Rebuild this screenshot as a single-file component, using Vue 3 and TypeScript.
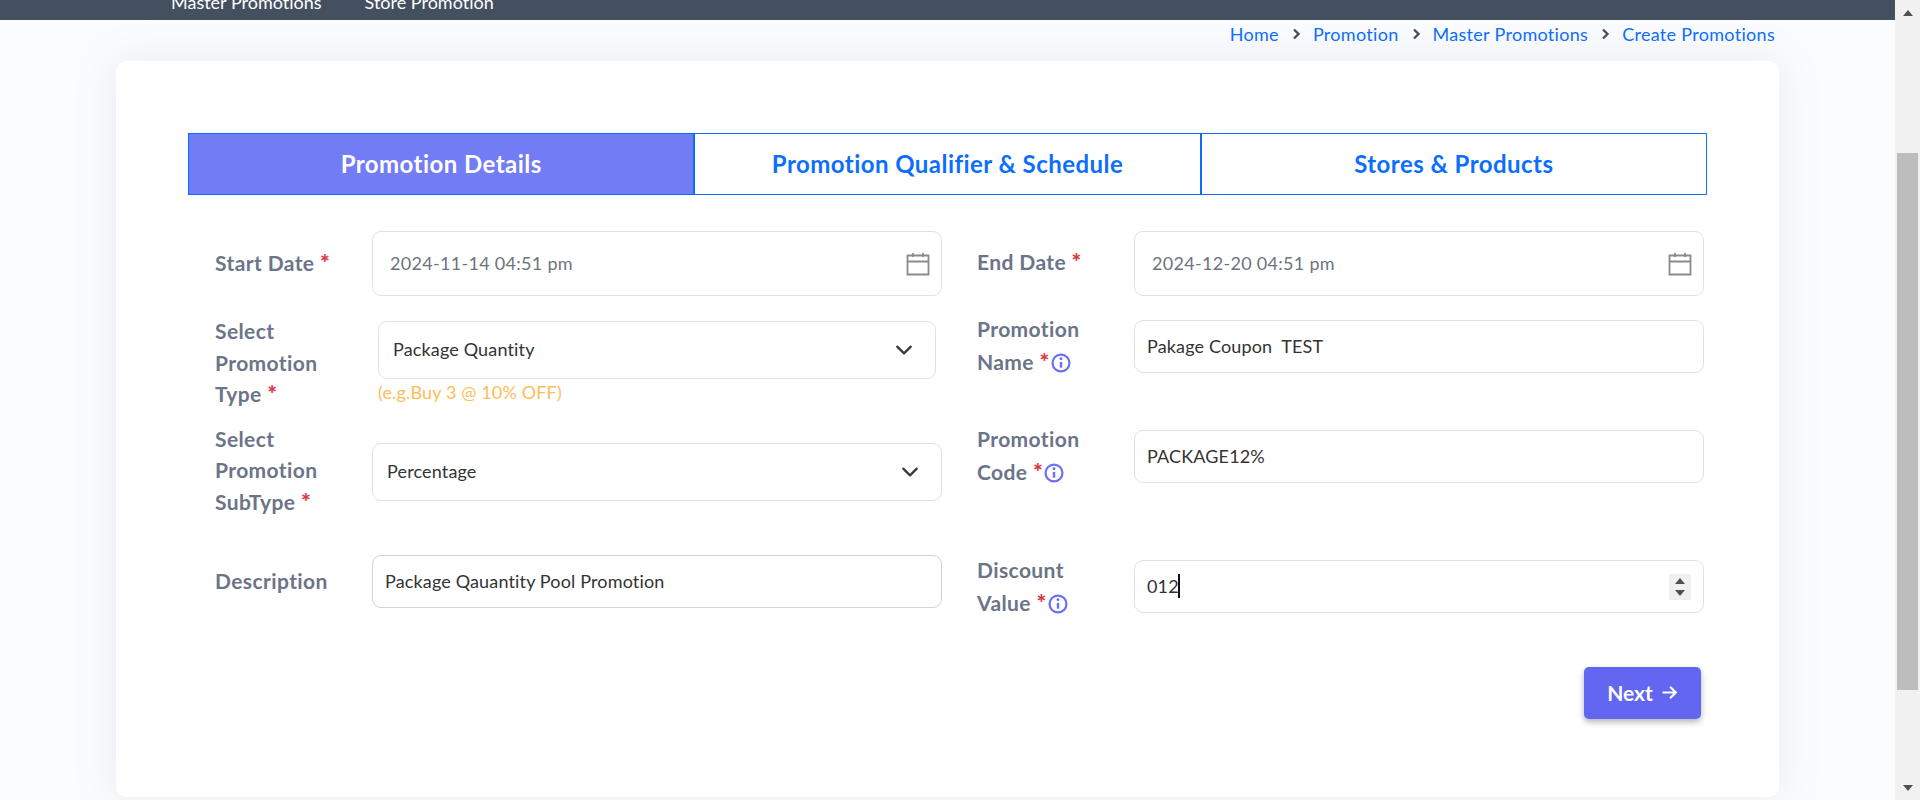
<template>
  <div class="page">
    <div class="main">
      <header class="topbar">
        <a class="nav-link">Master Promotions</a>
        <a class="nav-link">Store Promotion</a>
      </header>

      <nav class="crumbs">
        <template v-for="(crumb, i) in crumbs" :key="crumb">
          <svg v-if="i > 0" class="crumb-sep" viewBox="0 0 10 12" width="10" height="12">
            <path d="M3 1.5 7.5 6 3 10.5" fill="none" stroke="#444f5f" stroke-width="2.4" />
          </svg>
          <a class="crumb">{{ crumb }}</a>
        </template>
      </nav>

      <section class="card">
        <div class="tabs">
          <div class="tab active">Promotion Details</div>
          <div class="tab">Promotion Qualifier &amp; Schedule</div>
          <div class="tab">Stores &amp; Products</div>
        </div>

        <div class="form">
          <div class="col col-left">
            <div class="field row-date">
              <label class="label">Start Date <span class="req">*</span></label>
              <div class="control date">
                <span>2024-11-14 04:51 pm</span>
                <svg class="cal" viewBox="0 0 24 24" width="24" height="24">
                  <path d="M1.5 3.5h21v19h-21zM1.5 9.5h21M7 1v4M17 1v4" fill="none" stroke="#8a8a8a" stroke-width="1.8" />
                </svg>
              </div>
            </div>

            <div class="field row-type">
              <label class="label">Select Promotion Type <span class="req">*</span></label>
              <div class="select-wrap">
                <div class="control select">
                  <span>Package Quantity</span>
                  <svg viewBox="0 0 16 16" width="18" height="18">
                    <path d="M2 5l6 6 6-6" fill="none" stroke="#343a40" stroke-width="2" stroke-linecap="round" stroke-linejoin="round" />
                  </svg>
                </div>
                <div class="hint">(e.g.Buy 3 @ 10% OFF)</div>
              </div>
            </div>

            <div class="field row-subtype">
              <label class="label">Select Promotion SubType <span class="req">*</span></label>
              <div class="control select">
                <span>Percentage</span>
                <svg viewBox="0 0 16 16" width="18" height="18">
                  <path d="M2 5l6 6 6-6" fill="none" stroke="#343a40" stroke-width="2" stroke-linecap="round" stroke-linejoin="round" />
                </svg>
              </div>
            </div>

            <div class="field row-desc">
              <label class="label">Description</label>
              <div class="control text desc">Package Qauantity Pool Promotion</div>
            </div>
          </div>

          <div class="col col-right">
            <div class="field row-date">
              <label class="label">End Date <span class="req">*</span></label>
              <div class="control date">
                <span>2024-12-20 04:51 pm</span>
                <svg class="cal" viewBox="0 0 24 24" width="24" height="24">
                  <path d="M1.5 3.5h21v19h-21zM1.5 9.5h21M7 1v4M17 1v4" fill="none" stroke="#8a8a8a" stroke-width="1.8" />
                </svg>
              </div>
            </div>

            <div class="field row-name">
              <label class="label">Promotion Name <span class="req">*</span><svg class="info" viewBox="0 0 18 18" width="20" height="20">
                  <circle cx="9" cy="9" r="7.6" fill="none" stroke="#6b6ff5" stroke-width="2" />
                  <path d="M9 8v5.2" stroke="#6b6ff5" stroke-width="2.2" />
                  <circle cx="9" cy="5.2" r="1.3" fill="#6b6ff5" />
                </svg></label>
              <div class="control text">Pakage Coupon&nbsp; TEST</div>
            </div>

            <div class="field row-code">
              <label class="label">Promotion Code <span class="req">*</span><svg class="info" viewBox="0 0 18 18" width="20" height="20">
                  <circle cx="9" cy="9" r="7.6" fill="none" stroke="#6b6ff5" stroke-width="2" />
                  <path d="M9 8v5.2" stroke="#6b6ff5" stroke-width="2.2" />
                  <circle cx="9" cy="5.2" r="1.3" fill="#6b6ff5" />
                </svg></label>
              <div class="control text">PACKAGE12%</div>
            </div>

            <div class="field row-discount">
              <label class="label">Discount Value <span class="req">*</span><svg class="info" viewBox="0 0 18 18" width="20" height="20">
                  <circle cx="9" cy="9" r="7.6" fill="none" stroke="#6b6ff5" stroke-width="2" />
                  <path d="M9 8v5.2" stroke="#6b6ff5" stroke-width="2.2" />
                  <circle cx="9" cy="5.2" r="1.3" fill="#6b6ff5" />
                </svg></label>
              <div class="control text number">
                <span class="value">012<i class="caret"></i></span>
                <div class="spinner">
                  <i class="tri up"></i>
                  <i class="tri down"></i>
                </div>
              </div>
            </div>
          </div>
        </div>

        <div class="actions">
          <button class="next" type="button">
            Next
            <svg viewBox="0 0 16 16" width="17" height="17">
              <path d="M1.5 8h12.5M8.5 2.5 14 8l-5.5 5.5" fill="none" stroke="#fff" stroke-width="2" />
            </svg>
          </button>
        </div>
      </section>
    </div>

    <aside class="scrollbar">
      <div class="sb-btn"><i class="tri up"></i></div>
      <div class="sb-track"><div class="sb-thumb"></div></div>
      <div class="sb-btn"><i class="tri down"></i></div>
    </aside>
  </div>
</template>

<script setup lang="ts">
const crumbs: string[] = ['Home', 'Promotion', 'Master Promotions', 'Create Promotions'];
</script>

<style>
html,
body {
  margin: 0;
  background: #fbfcff;
}
</style>

<style scoped>
.page {
  display: flex;
  height: 800px;
  overflow: hidden;
  font-family: Lato, "Open Sans", sans-serif;
  font-variant-ligatures: none;
}

.main {
  flex: 1;
  min-width: 0;
}

.topbar {
  height: 20px;
  background: #444f5f;
  display: flex;
  align-items: flex-end;
  gap: 43px;
  padding: 0 0 8px 171px;
  box-sizing: border-box;
  overflow: hidden;
}

.nav-link {
  color: #fff;
  font-size: 18px;
  line-height: 20px;
  white-space: nowrap;
}

.crumbs {
  height: 41px;
  display: flex;
  align-items: center;
  justify-content: flex-end;
  gap: 12px;
  padding: 0 120px 14px 0;
  box-sizing: border-box;
}

.crumb {
  color: #0d6efd;
  font-size: 18px;
  letter-spacing: 0.3px;
  line-height: 20px;
}

.card {
  width: 1663px;
  height: 736px;
  margin-left: 116px;
  padding: 72px;
  box-sizing: border-box;
  background: #fff;
  border-radius: 10px;
  box-shadow: 0 0 45px rgba(120, 128, 150, 0.14);
}

.tabs {
  display: flex;
  height: 62px;
}

.tab {
  flex: 1;
  display: flex;
  align-items: center;
  justify-content: center;
  padding-bottom: 2px;
  box-sizing: border-box;
  border: 1px solid #0d6efd;
  color: #0d6efd;
  font-size: 24px;
  letter-spacing: 0.45px;
  font-weight: 700;
}

.tab.active {
  background: #727cf5;
  color: #fff;
}

.form {
  display: flex;
  margin-top: 36px;
}

.col {
  display: flex;
  flex-direction: column;
}

.col-left {
  width: 759px;
  padding: 0 5px 0 27px;
  box-sizing: border-box;
}

.col-right {
  width: 730px;
  margin-left: 30px;
  padding-right: 3px;
  box-sizing: border-box;
}

.field {
  display: flex;
}

.label {
  flex: none;
  width: 157px;
  padding-right: 18px;
  box-sizing: border-box;
  color: #6b7488;
  font-size: 21px;
  font-weight: 700;
  letter-spacing: 0.4px;
  line-height: 31.5px;
}

.col-left .label,
.row-date .label {
  margin: -1px 0 1px;
}

.col-right .label {
  line-height: 32.5px;
}

.req {
  color: #dc3545;
  font-size: 1.1em;
  font-weight: 900;
  line-height: 0;
}

.info {
  vertical-align: 1px;
  margin: -4px 0 -4px 1px;
}

.control {
  flex: 1;
  min-width: 0;
  display: flex;
  align-items: center;
  justify-content: space-between;
  box-sizing: border-box;
  border: 1px solid #dee2e6;
  border-radius: 9px;
  background: #fff;
  color: #333;
  font-size: 18px;
  letter-spacing: 0.15px;
  padding-bottom: 2px;
}

.date {
  height: 65px;
  padding-left: 17px;
  padding-right: 11px;
  color: #6c757d;
  letter-spacing: 0.3px;
}

.cal {
  margin-top: 2px;
}

.row-date {
  align-items: center;
}

.select {
  height: 58px;
  padding-left: 14px;
  padding-right: 22px;
}

.select svg {
  margin-top: 2px;
}

.select-wrap {
  flex: 1;
  min-width: 0;
  padding: 0 6px;
}

.select-wrap .select {
  flex: none;
}

.hint {
  color: #ffbc5a;
  font-size: 18px;
  letter-spacing: 0.15px;
  line-height: 24px;
  margin-top: 1px;
}

.row-type {
  margin-top: 20px;
}

.row-type .select-wrap {
  padding-top: 5px;
}

.row-subtype {
  margin-top: 13px;
}

.row-subtype .control {
  margin-top: 19px;
}

.row-desc {
  margin-top: 37px;
  align-items: center;
}

.desc {
  border-color: #ced4da;
}

.text {
  height: 53px;
  padding-left: 12px;
}

.row-name {
  margin-top: 17px;
}

.row-name .control {
  margin-top: 7px;
}

.row-code {
  margin-top: 45px;
}

.row-code .control {
  margin-top: 7px;
}

.row-discount {
  margin-top: 66px;
}

.row-discount .control {
  margin-top: 6px;
}

.number {
  padding-right: 12px;
  padding-bottom: 0;
}

.value {
  display: flex;
  align-items: center;
  margin-bottom: 2px;
}

.caret {
  width: 2px;
  height: 24px;
  background: #111;
  margin-left: -1px;
}

.spinner {
  width: 22px;
  height: 26px;
  background: #f0f0f0;
  display: flex;
  flex-direction: column;
  align-items: center;
  justify-content: center;
  gap: 6px;
}

.tri {
  display: block;
  width: 0;
  height: 0;
  border-left: 5.5px solid transparent;
  border-right: 5.5px solid transparent;
}

.tri.up {
  border-bottom: 6px solid #505050;
}

.tri.down {
  border-top: 6px solid #505050;
}

.actions {
  display: flex;
  justify-content: flex-end;
  padding-right: 6px;
  margin-top: 48px;
}

.next {
  width: 117px;
  height: 52px;
  display: flex;
  align-items: center;
  justify-content: center;
  gap: 8px;
  padding: 0 0 2px;
  border: none;
  border-radius: 5px;
  background: #6366f1;
  color: #fff;
  font-family: inherit;
  font-size: 21px;
  font-weight: 700;
  box-shadow: 0 3px 6px rgba(0, 0, 0, 0.3);
}

.scrollbar {
  flex: none;
  width: 25px;
  background: #f1f1f1;
  display: flex;
  flex-direction: column;
}

.sb-btn {
  height: 25px;
  display: flex;
  align-items: center;
  justify-content: center;
}

.sb-track {
  flex: 1;
  padding-top: 128px;
}

.sb-thumb {
  height: 537px;
  margin: 0 2px;
  background: #bdbdbd;
}
</style>
